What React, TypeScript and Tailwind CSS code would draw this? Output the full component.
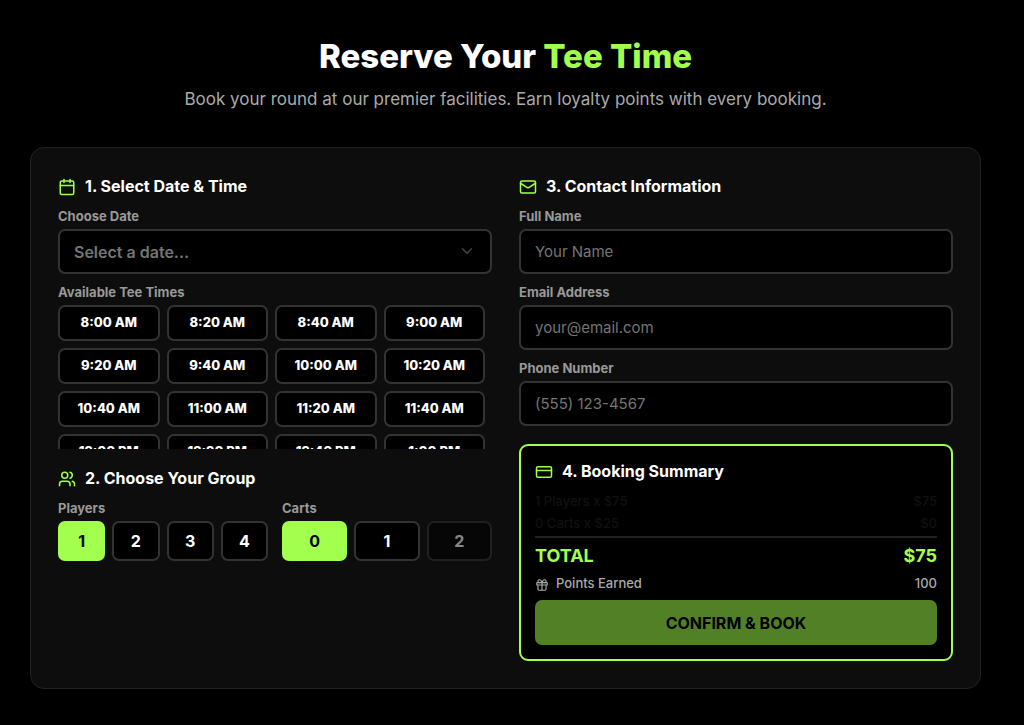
import { useState, type ReactNode } from "react";
import { Calendar, ChevronDown, CreditCard, Gift, Mail, Users, type LucideIcon } from "lucide-react";

const TEE_TIMES = [
  "8:00 AM", "8:20 AM", "8:40 AM", "9:00 AM",
  "9:20 AM", "9:40 AM", "10:00 AM", "10:20 AM",
  "10:40 AM", "11:00 AM", "11:20 AM", "11:40 AM",
  "12:00 PM", "12:20 PM", "12:40 PM", "1:00 PM",
  "1:20 PM", "1:40 PM", "2:00 PM", "2:20 PM",
];

const PLAYER_RATE = 75;
const CART_RATE = 25;

function SectionTitle({ icon: Icon, children }: { icon: LucideIcon; children: ReactNode }) {
  return (
    <h2 className="mb-[9px] flex items-center gap-[9px] text-[16px] leading-[23px] font-bold text-white">
      <Icon size={18} className="shrink-0 text-[#a3ff4d]" aria-hidden />
      {children}
    </h2>
  );
}

const labelClass = "mb-1 block text-[13px] leading-[18px] font-bold text-[#999999]";

function Field({ id, label, type, placeholder }: { id: string; label: string; type: string; placeholder: string }) {
  return (
    <div>
      <label htmlFor={id} className={labelClass}>{label}</label>
      <input
        id={id}
        type={type}
        placeholder={placeholder}
        className="block h-[45px] w-full rounded-[7px] border-2 border-[#333333] bg-black px-[14px] text-[15px] text-white outline-none placeholder:text-[#757575] focus:border-[#a3ff4d]"
      />
    </div>
  );
}

function Choice({ value, selected, disabled, onSelect }: { value: number; selected: boolean; disabled?: boolean; onSelect: (v: number) => void }) {
  return (
    <button
      type="button"
      aria-pressed={selected}
      disabled={disabled}
      onClick={() => onSelect(value)}
      className={
        "h-10 rounded-[7px] border-2 text-[16px] font-bold disabled:opacity-50 " +
        (selected ? "border-[#a3ff4d] bg-[#a3ff4d] text-black" : "border-[#333333] bg-black text-white")
      }
    >
      {value}
    </button>
  );
}

export default function App() {
  const [date, setDate] = useState("");
  const [time, setTime] = useState("");
  const [players, setPlayers] = useState(1);
  const [carts, setCarts] = useState(0);
  const total = players * PLAYER_RATE + carts * CART_RATE;

  return (
    <main className="min-h-screen bg-black pt-[36px] pr-[43px] pb-[36px] pl-[30px] font-['Inter',sans-serif] text-white">
      <header className="mb-[35px] text-center">
        <h1 className="text-[33px] leading-[40px] font-extrabold">
          Reserve Your <span className="text-[#a3ff4d]">Tee Time</span>
        </h1>
        <p className="mt-[10px] text-[17px] leading-[26px] text-[#aaaaaa]">
          Book your round at our premier facilities. Earn loyalty points with every booking.
        </p>
      </header>

      <form
        onSubmit={(e) => e.preventDefault()}
        className="grid grid-cols-2 gap-[27px] rounded-[14px] border border-[#222222] bg-[#0d0d0d] p-[27px]"
      >
        <div className="flex flex-col gap-[18px]">
          <section>
            <SectionTitle icon={Calendar}>1. Select Date &amp; Time</SectionTitle>
            <label htmlFor="date" className={labelClass}>Choose Date</label>
            <div className="relative mb-[9px]">
              <select
                id="date"
                value={date}
                onChange={(e) => setDate(e.target.value)}
                className="block h-[45px] w-full appearance-none rounded-[7px] border-2 border-[#333333] bg-black px-[14px] text-[16px] font-semibold text-[#757575] outline-none"
              >
                <option value="">Select a date...</option>
                <option value="today">Today</option>
                <option value="tomorrow">Tomorrow</option>
              </select>
              <ChevronDown size={18} className="pointer-events-none absolute top-[13px] right-4 text-[#444444]" aria-hidden />
            </div>
            <p id="times" className={labelClass}>Available Tee Times</p>
            <div
              role="group"
              aria-labelledby="times"
              className="grid h-[144px] grid-cols-4 content-start gap-[7px] overflow-y-auto pr-[7px] [scrollbar-width:none]"
            >
              {TEE_TIMES.map((t) => (
                <button
                  key={t}
                  type="button"
                  aria-pressed={t === time}
                  onClick={() => setTime(t)}
                  className={
                    "h-9 rounded-[7px] border-2 text-[13px] font-extrabold " +
                    (t === time ? "border-[#a3ff4d] bg-[#a3ff4d] text-black" : "border-[#333333] bg-black text-white")
                  }
                >
                  {t}
                </button>
              ))}
            </div>
          </section>

          <section>
            <SectionTitle icon={Users}>2. Choose Your Group</SectionTitle>
            <div className="grid grid-cols-2 gap-[14px]">
              <div>
                <p id="players" className={labelClass}>Players</p>
                <div role="group" aria-labelledby="players" className="grid grid-cols-4 gap-[7px]">
                  {[1, 2, 3, 4].map((n) => (
                    <Choice key={n} value={n} selected={n === players} onSelect={setPlayers} />
                  ))}
                </div>
              </div>
              <div>
                <p id="carts" className={labelClass}>Carts</p>
                <div role="group" aria-labelledby="carts" className="grid grid-cols-3 gap-[7px]">
                  {[0, 1, 2].map((n) => (
                    <Choice key={n} value={n} selected={n === carts} disabled={n > players} onSelect={setCarts} />
                  ))}
                </div>
              </div>
            </div>
          </section>
        </div>

        <div className="flex flex-col gap-[18px]">
          <section>
            <SectionTitle icon={Mail}>3. Contact Information</SectionTitle>
            <div className="flex flex-col gap-[9px]">
              <Field id="name" label="Full Name" type="text" placeholder="Your Name" />
              <Field id="email" label="Email Address" type="email" placeholder="your@email.com" />
              <Field id="phone" label="Phone Number" type="tel" placeholder="(555) 123-4567" />
            </div>
          </section>

          <section className="rounded-[9px] border-2 border-[#a3ff4d] bg-black p-[14px]">
            <SectionTitle icon={CreditCard}>4. Booking Summary</SectionTitle>
            <div className="flex flex-col gap-1 text-[13px] leading-[18px] font-medium">
              <div className="flex justify-between text-[#111111]">
                <span>{`${players} Players x $${PLAYER_RATE}`}</span>
                <span>{`$${players * PLAYER_RATE}`}</span>
              </div>
              <div className="flex justify-between text-[#111111]">
                <span>{`${carts} Carts x $${CART_RATE}`}</span>
                <span>{`$${carts * CART_RATE}`}</span>
              </div>
              <div className="flex justify-between border-t-2 border-[#222222] pt-1 text-[18px] leading-[28px] font-bold text-[#a3ff4d]">
                <span>TOTAL</span>
                <span>{`$${total}`}</span>
              </div>
              <div className="flex justify-between text-[#aaaaaa]">
                <span className="flex items-end gap-[7px]">
                  <Gift size={14} aria-hidden />
                  Points Earned
                </span>
                <span>100</span>
              </div>
            </div>
            <button
              type="submit"
              disabled={!date || !time}
              className="mt-2 block h-[45px] w-full rounded-[7px] bg-[#a3ff4d] text-[16px] font-bold text-black disabled:opacity-50"
            >
              CONFIRM &amp; BOOK
            </button>
          </section>
        </div>
      </form>
    </main>
  );
}
